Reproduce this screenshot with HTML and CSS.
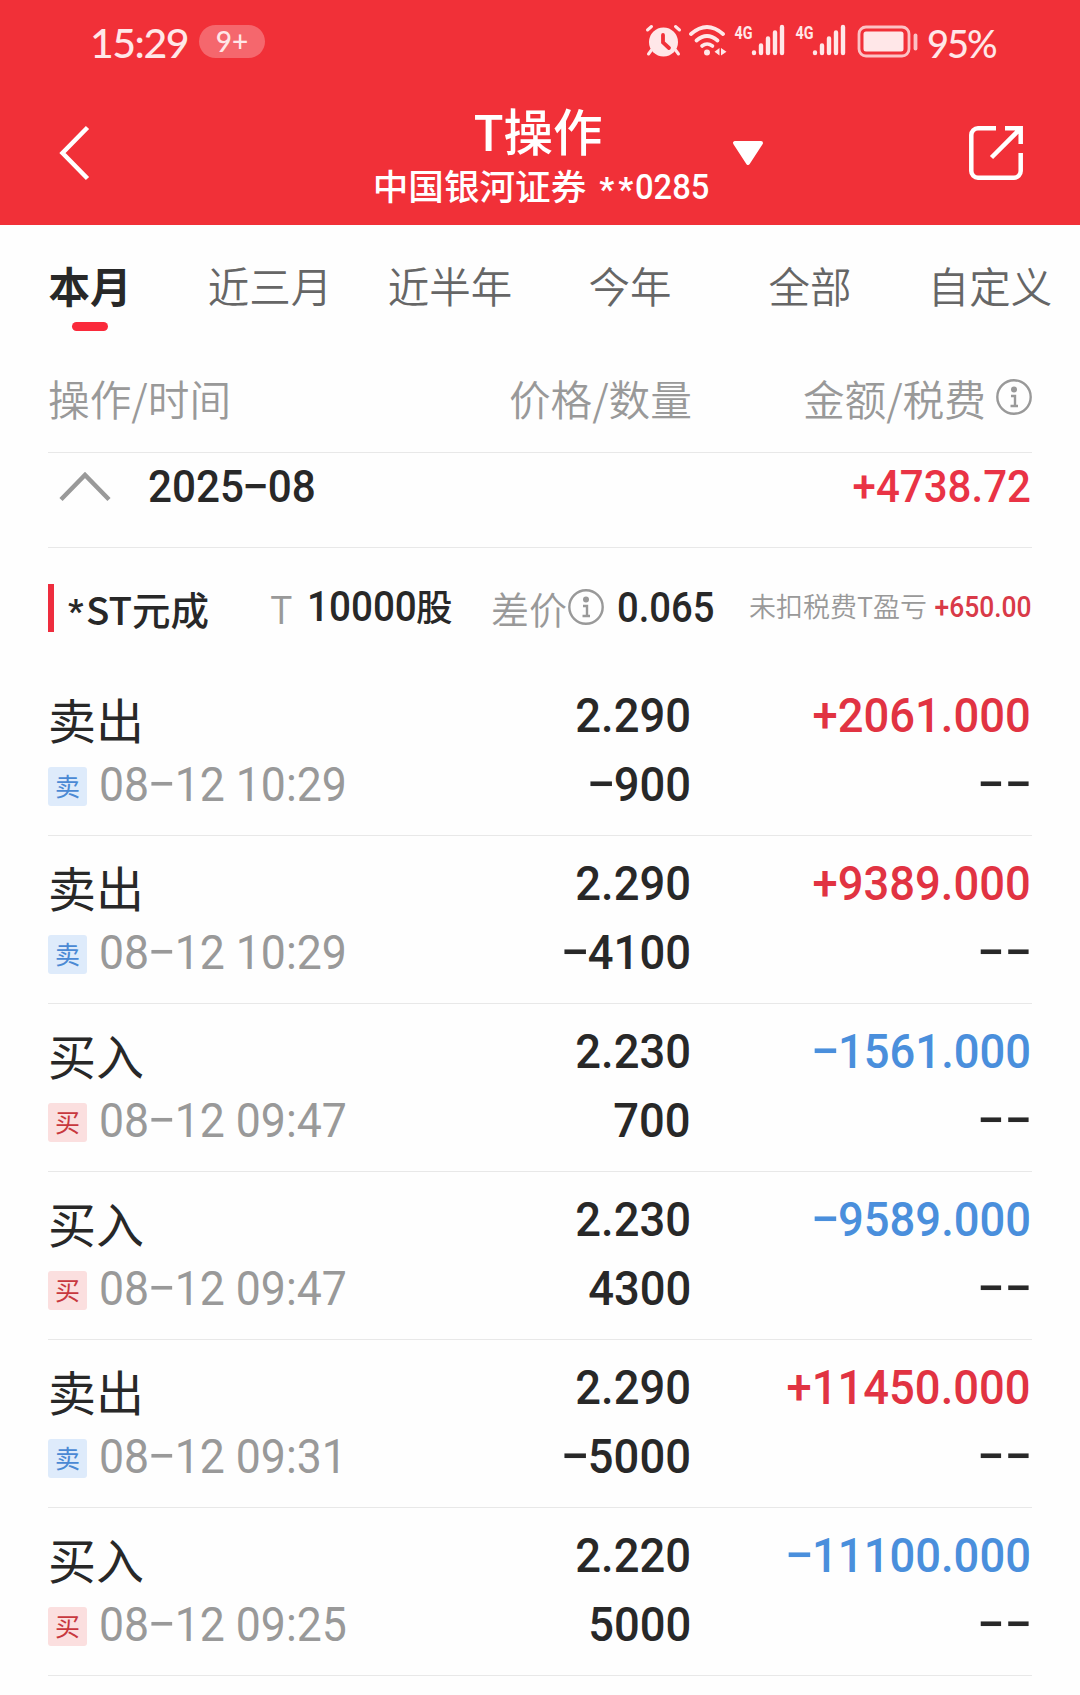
FILE: index.html
```html
<!DOCTYPE html>
<html lang="zh-CN">
<head>
<meta charset="utf-8">
<title>T操作</title>
<link rel="stylesheet" href="styles.css">
</head>
<body>
<header class="header">
  <div class="status">
    <span class="clock">15:29</span><span class="pill">9+</span>
    <svg class="status-icons" width="290" height="40" viewBox="0 0 290 40">
      <g fill="none" stroke="#ffe7e8" stroke-linecap="round">
        <path d="M8.500 34l3-4M38.500 34l-3-4M7.500 10l4-3.500M39.500 10l-4-3.500" stroke-width="3"/>
        <circle cx="23.500" cy="22" r="14.500" fill="#ffe7e8" stroke="none"/>
        <path d="M23 15v7.500l6 5.500" stroke="#f13038" stroke-width="3.800"/>
        <path d="M51 14Q67 0 83 14" stroke-width="3.800"/>
        <path d="M56.500 20.500Q67 11.500 77.500 20.500" stroke-width="3.800"/>
        <path d="M62 26Q67 22 72.500 26" stroke-width="3.600"/>
        <circle cx="67" cy="32.500" r="3" fill="#ffe7e8" stroke="none"/>
        <path d="M79.500 28v7.500l-5-3.700zM81 28v7.500l5.500-3.700z" fill="#ffe7e8" stroke="none"/>
        <path d="M114 32.500v.5M121 25.500v7.500M128 18.500v14.500M135 12.500v20.500M142 7v26" stroke-width="4.400"/>
        <path d="M175 32.500v.5M182 25.500v7.500M189 18.500v14.500M196 12.500v20.500M203 7v26" stroke-width="4.400"/>
        <rect x="219" y="7" width="50" height="29" rx="7" stroke-width="2.800" opacity=".8"/>
        <rect x="223.500" y="11.500" width="40" height="20" rx="2.500" fill="#ffe7e8" stroke="none"/>
        <path d="M275.500 15.500v13" stroke-width="3.800" opacity=".8"/>
      </g>
      <g class="net">
        <text x="94.500" y="18.500" textLength="18" lengthAdjust="spacingAndGlyphs">4G</text>
        <text x="155.500" y="18.500" textLength="18" lengthAdjust="spacingAndGlyphs">4G</text>
      </g>
    </svg>
    <span class="percent">95%</span>
  </div>
  <div class="nav">
    <svg class="back" width="34" height="60" viewBox="0 0 34 60"><path d="M30.500 4.500L5.500 30l25 25.500" fill="none" stroke="#fff" stroke-width="4.500"/></svg>
    <div class="titles">
      <h1 class="title">T操作</h1>
      <div class="account"><span>中国银河证券</span><span class="acct-no"><span class="stars">**</span><span class="digits">0285</span></span></div>
    </div>
    <svg class="caret" width="32" height="26" viewBox="0 0 32 26"><path d="M3 3h26L16 23z" fill="#fff" stroke="#fff" stroke-width="4" stroke-linejoin="round"/></svg>
    <svg class="share" width="54" height="54" viewBox="0 0 54 54"><g fill="none" stroke="#fff" stroke-width="4.500"><path d="M27 2.300H9a6.700 6.700 0 0 0-6.700 6.700v36a6.700 6.700 0 0 0 6.700 6.700h36a6.700 6.700 0 0 0 6.700-6.700V27"/><path d="M36 2.300h15.700V18M51 3L22.500 31.500"/></g></svg>
  </div>
</header>

<nav class="tabs">
  <span class="tab active">本月</span><span class="tab">近三月</span><span class="tab">近半年</span><span class="tab">今年</span><span class="tab">全部</span><span class="tab">自定义</span>
</nav>

<main class="content">
  <div class="cols head">
    <span>操作/时间</span><span class="right">价格/数量</span>
    <span class="right fee">金额/税费<svg class="info" width="36" height="36" viewBox="0 0 36 36"><circle cx="18" cy="18" r="16.700" fill="none" stroke="#999" stroke-width="2.400"/><circle cx="18" cy="10.500" r="3" fill="#999"/><path d="M15 17h4v10M14.500 27h7.500" fill="none" stroke="#999" stroke-width="2.400"/></svg></span>
  </div>
  <div class="month">
    <svg class="chevron" width="52" height="32" viewBox="0 0 52 32"><path d="M2 29.500L26 5l24 24.500" fill="none" stroke="#999" stroke-width="4.500"/></svg>
    <span class="month-name">2025<span class="dash">−</span>08</span>
    <span class="month-sum">+4738.72</span>
  </div>
  <div class="summary">
    <span class="mark"></span>
    <span class="stock"><span class="star">*</span>ST元成</span>
    <span class="t-label">T</span>
    <span class="shares"><span class="qty">10000</span>股</span>
    <span class="spread">差价<svg class="info" width="36" height="36" viewBox="0 0 36 36"><circle cx="18" cy="18" r="16.700" fill="none" stroke="#999" stroke-width="2.400"/><circle cx="18" cy="10.500" r="3" fill="#999"/><path d="M15 17h4v10M14.500 27h7.500" fill="none" stroke="#999" stroke-width="2.400"/></svg></span>
    <span class="spread-value">0.065</span>
    <span class="pl-label">未扣税费T盈亏</span>
    <span class="pl-value">+650.00</span>
  </div>

  <div class="cols row">
    <div><div class="name">卖出</div><div class="when"><span class="tag sell">卖</span><span class="date">08<span class="dash">−</span>12 10:29</span></div></div>
    <div class="nums"><span class="num">2.290</span><span class="num"><span class="dash">−</span>900</span></div>
    <div class="nums"><span class="num up">+2061.000</span><span class="num none">−−</span></div>
  </div>
  <div class="cols row">
    <div><div class="name">卖出</div><div class="when"><span class="tag sell">卖</span><span class="date">08<span class="dash">−</span>12 10:29</span></div></div>
    <div class="nums"><span class="num">2.290</span><span class="num"><span class="dash">−</span>4100</span></div>
    <div class="nums"><span class="num up">+9389.000</span><span class="num none">−−</span></div>
  </div>
  <div class="cols row">
    <div><div class="name">买入</div><div class="when"><span class="tag buy">买</span><span class="date">08<span class="dash">−</span>12 09:47</span></div></div>
    <div class="nums"><span class="num">2.230</span><span class="num">700</span></div>
    <div class="nums"><span class="num down"><span class="dash">−</span>1561.000</span><span class="num none">−−</span></div>
  </div>
  <div class="cols row">
    <div><div class="name">买入</div><div class="when"><span class="tag buy">买</span><span class="date">08<span class="dash">−</span>12 09:47</span></div></div>
    <div class="nums"><span class="num">2.230</span><span class="num">4300</span></div>
    <div class="nums"><span class="num down"><span class="dash">−</span>9589.000</span><span class="num none">−−</span></div>
  </div>
  <div class="cols row">
    <div><div class="name">卖出</div><div class="when"><span class="tag sell">卖</span><span class="date">08<span class="dash">−</span>12 09:31</span></div></div>
    <div class="nums"><span class="num">2.290</span><span class="num"><span class="dash">−</span>5000</span></div>
    <div class="nums"><span class="num up">+11450.000</span><span class="num none">−−</span></div>
  </div>
  <div class="cols row">
    <div><div class="name">买入</div><div class="when"><span class="tag buy">买</span><span class="date">08<span class="dash">−</span>12 09:25</span></div></div>
    <div class="nums"><span class="num">2.220</span><span class="num">5000</span></div>
    <div class="nums"><span class="num down"><span class="dash">−</span>11100.000</span><span class="num none">−−</span></div>
  </div>
</main>
</body>
</html>
```

FILE: styles.css
```css
* { box-sizing: border-box; }
body {
  margin: 0;
  background: #fefefe;
  color: #282828;
  font-family: "Noto Sans CJK SC", sans-serif;
}
svg { display: block; flex: none; }
span { white-space: nowrap; }
.dash { display: inline-block; transform: scaleX(1.14); }

.header { height: 225px; background: #f13038; color: #fff; }
.status {
  display: flex;
  height: 86px;
  padding-left: 90px;
  color: #ffe7e8;
  font-family: Lato, sans-serif;
}
.clock { width: 109px; padding-top: 19px; font-size: 41px; line-height: 48px; letter-spacing: -1.500px; font-weight: 500; }
.pill {
  width: 66px;
  height: 33px;
  margin-top: 25px;
  border-radius: 17px;
  background: #f5676d;
  font-size: 28px;
  font-weight: 500;
  line-height: 33px;
  text-align: center;
}
.status-icons { margin: 20px 0 0 375px; }
.net text { fill: #ffe7e8; font: 700 19px Roboto, sans-serif; }
.percent { margin-left: -3px; padding-top: 19px; font-size: 38px; line-height: 48px; letter-spacing: -2px; font-weight: 500; }

.nav { display: flex; height: 139px; }
.back { margin: 37px 0 0 57px; }
.titles { width: 380px; margin-left: 259px; text-align: center; }
.title {
  margin: 14px 0 0;
  padding-right: 4px;
  font-size: 49.500px;
  font-weight: 500;
  line-height: 60px;
}
.account {
  display: flex;
  justify-content: center;
  gap: 13px;
  padding-left: 2px;
  font-size: 35.600px;
  font-weight: 500;
  line-height: 50px;
}
.acct-no { display: flex; width: 110px; padding-top: 2px; font-family: Roboto, sans-serif; font-weight: 500; }
.stars { width: 36px; padding-top: 3px; font-size: 33px; letter-spacing: 4px; font-weight: 700; line-height: 50px; }
.digits { transform: scaleX(.92); transform-origin: left; }
.caret { margin: 54px 0 0 2px; }
.share { margin: 40px 0 0 205px; }

.tabs { display: grid; grid-template-columns: repeat(6, 180px); height: 130px; }
.tab { padding-top: 30px; font-size: 41.500px; line-height: 60px; text-align: center; color: #666; font-weight: 350; }
.active { color: #282828; font-weight: 700; }
.active::after {
  content: "";
  display: block;
  width: 36px;
  height: 9px;
  margin: 7px auto 0;
  border-radius: 5px;
  background: #fa2a3b;
}

.content { padding: 0 48px; }
.cols { display: grid; grid-template-columns: 342px 302px 340px; border-bottom: 1px solid #e8e8e8; }
.right { text-align: right; }
.head { height: 98px; padding-top: 13px; font-size: 41.700px; font-weight: 350; line-height: 60px; color: #999; }
.fee { display: flex; justify-content: flex-end; align-items: center; gap: 10px; height: 60px; }
.head .info { margin-top: -3px; }

.month {
  display: flex;
  height: 95px;
  border-bottom: 1px solid #e8e8e8;
  font: 500 45px/67px Roboto, sans-serif;
}
.chevron { margin: 17px 0 0 11px; }
.month-name { margin-left: 37px; transform: scaleX(.938); transform-origin: left; }
.month-sum { margin-left: auto; margin-right: 1px; color: #e93345; transform: scaleX(.934); transform-origin: right; }

.summary {
  display: grid;
  grid-template-columns: 20px 202px 37px 184px 126px 132px 160px 1fr;
  height: 120px;
  padding-top: 36px;
  line-height: 48px;
  white-space: nowrap;
}
.mark { width: 6px; height: 48px; background: #ee2d3e; }
.stock { display: flex; font-size: 38.500px; font-weight: 500; }
.star { width: 18px; padding-top: 3px; font: 700 34px/48px Roboto, sans-serif; }
.t-label { font-size: 38px; font-weight: 350; color: #999; }
.shares { font-size: 36.500px; font-weight: 500; line-height: 44px; }
.qty { display: inline-block; width: 109px; font-family: Roboto, sans-serif; font-size: 42px; font-weight: 500; transform: scaleX(.92); transform-origin: left; }
.spread { display: flex; gap: 1px; font-size: 38px; font-weight: 350; color: #999; }
.spread .info { margin-top: 5px; }
.spread-value { font: 500 42px/47px Roboto, sans-serif; transform: scaleX(.91); transform-origin: left; }
.pl-label { font-size: 27px; font-weight: 350; line-height: 44px; color: #999; }
.pl-value { justify-self: end; font: 500 29px/46px Roboto, sans-serif; color: #d93a48; transform: scaleX(.91); transform-origin: right; }

.row { height: 168px; }
.name { padding-top: 16px; font-size: 48px; line-height: 69px; font-weight: 400; }
.when { display: flex; align-items: center; margin-top: -3px; height: 69px; }
.tag {
  width: 39px;
  height: 39px;
  margin: 4px 12px 0 0;
  border-radius: 3px;
  font-size: 25px;
  line-height: 36px;
  text-align: center;
}
.sell { background: #deebfb; color: #4a89d4; }
.buy { background: #fbdfdf; color: #c8383e; }
.date { font: 400 49px/69px Roboto, sans-serif; color: #999; transform: scaleX(.91); transform-origin: left; }
.nums { display: flex; flex-direction: column; align-items: flex-end; padding-top: 13px; }
.num { margin-right: 1px; font: 500 49px/69px Roboto, sans-serif; transform: scaleX(.926); transform-origin: right; }
.none { margin-right: 0; transform: scaleX(1); }
.up { color: #e13342; }
.down { color: #4a8fdc; }
```
